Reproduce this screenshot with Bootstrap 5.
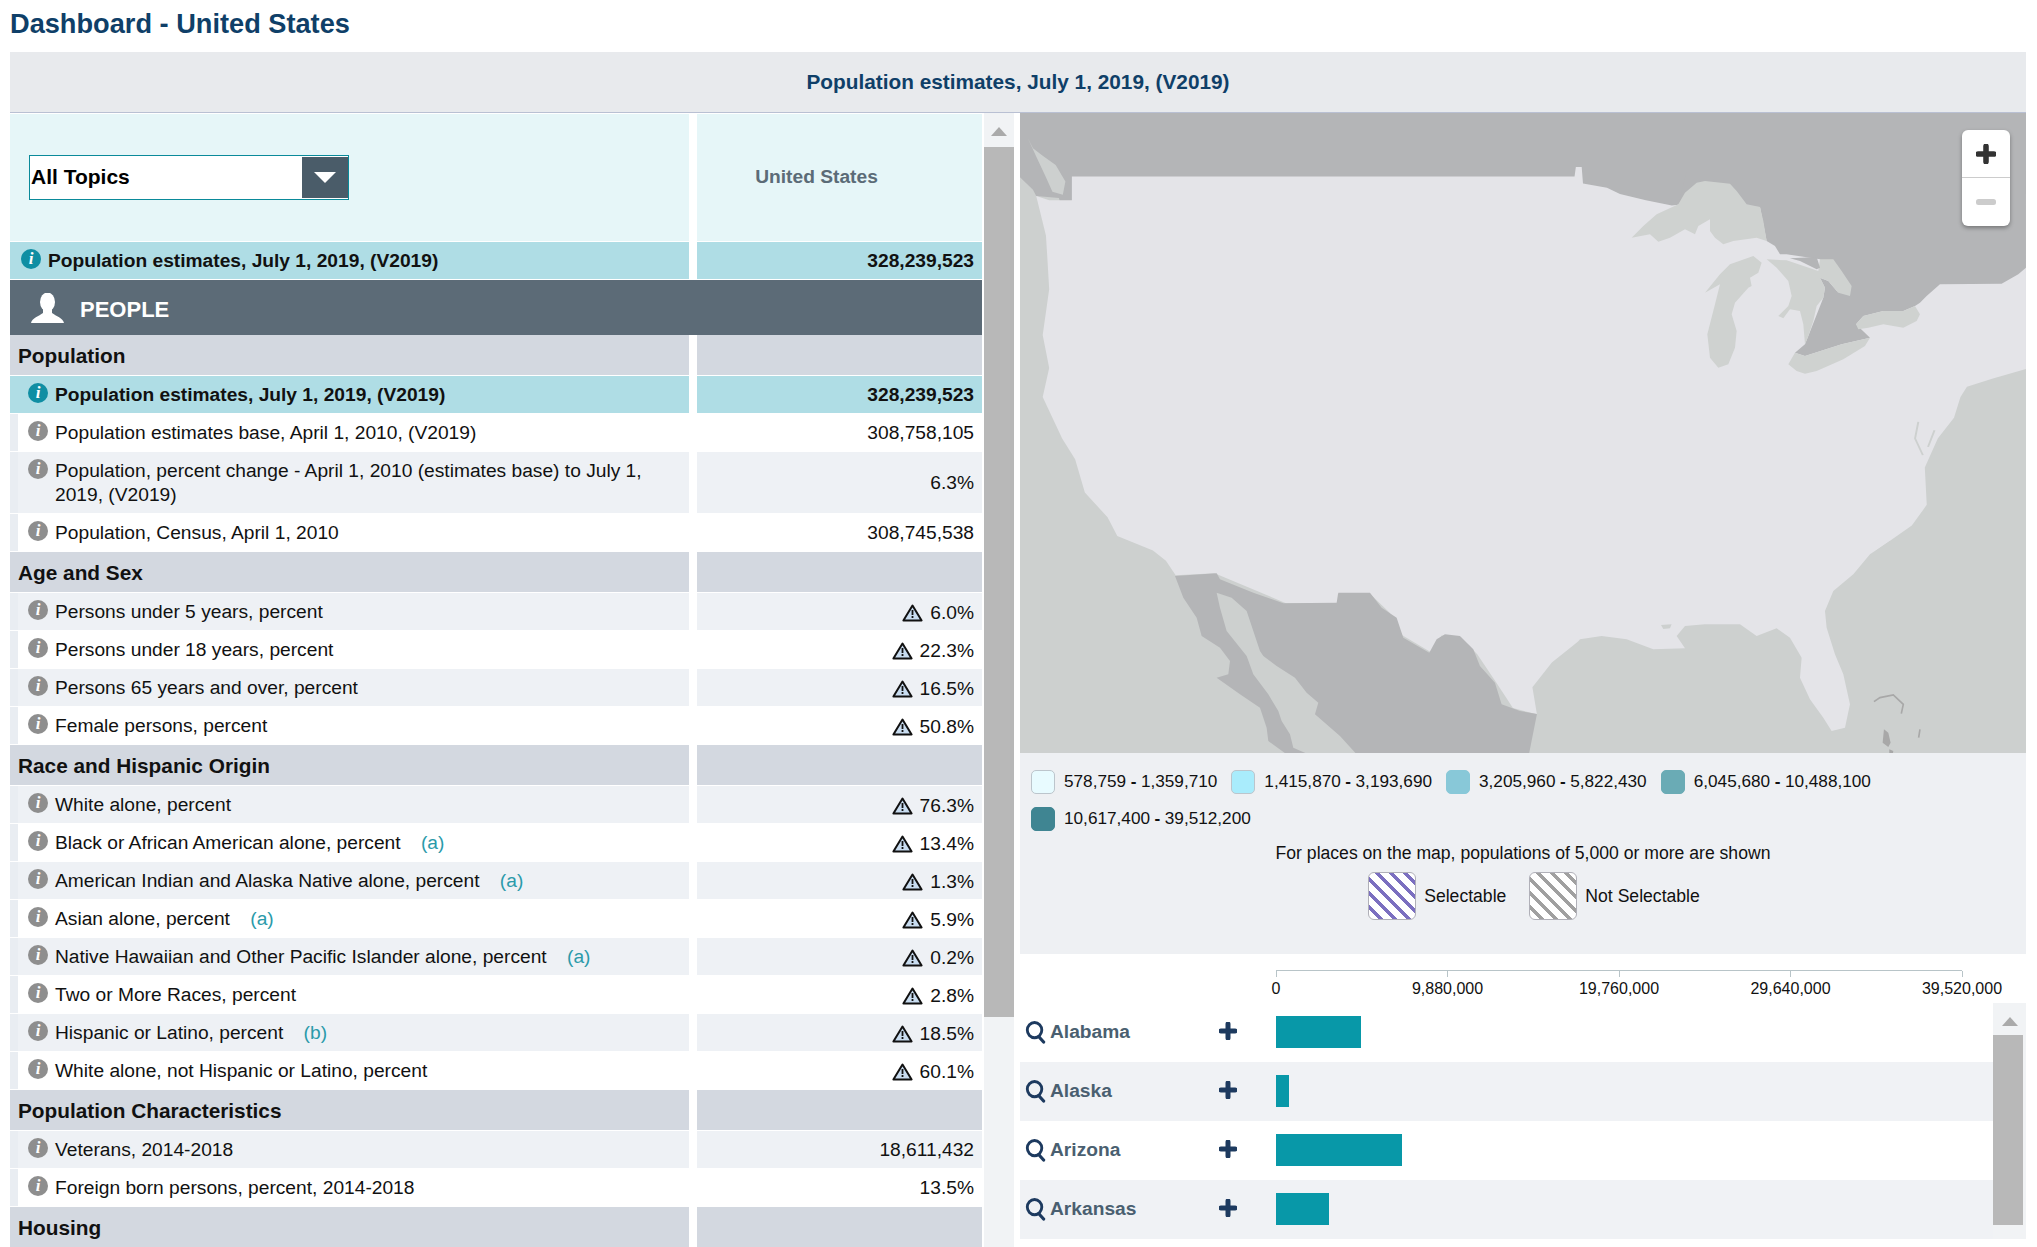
<!DOCTYPE html>
<html lang="en">
<head>
<meta charset="UTF-8">
<title>Dashboard - United States</title>
<link href="https://cdn.jsdelivr.net/npm/bootstrap@5.3.0/dist/css/bootstrap.min.css" rel="stylesheet">
<style>
    html, body { height: 1247px; overflow: hidden; }
    body { font-family: "Liberation Sans", Arial, sans-serif; font-size: 19.2px; color: #111; background: #fff; }
    .dash-title { height: 52px; margin: 0; padding: 8px 0 0 10px; font-size: 27.2px; font-weight: 700; line-height: 32px; color: #0f3f68; }
    .page-body { width: 2016px; margin-left: 10px; }
    .top-band { height: 61px; background: #e8eaed; border-bottom: 1px solid #b9c0d3; color: #0f3f68; font-size: 20.8px; font-weight: 700; }
    .left-pane { width: 1010px; height: 1134px; }
    .data-col { width: 972px; }
    .right-pane { width: 1006px; }

    /* table rows */
    .data-row { padding-bottom: 1px; line-height: 24px; }
    .cell-label { width: 679px; padding: 6.5px 10px 6.5px 10px; border-left: 8px solid #e9edf2; }
    .cell-val { width: 285px; padding: 6.5px 8px; }
    .warn-val { padding-top: 8px; padding-bottom: 5px; }
    .tint > div { background-color: #eef1f5; }
    .hot > div { background-color: #afdde5; font-weight: 700; }
    .hot .cell-label { border-left-color: #afdde5; }
    .top-hot .cell-label { border-left: 0; padding-left: 11px; }
    .sect-row { padding-bottom: 1px; font-size: 20.8px; font-weight: 700; }
    .sect-row > div { height: 40px; background: #d3d8e0; line-height: 42px; }
    .sect-row .cell-label { width: 679px; border: 0; padding: 0 0 0 8px; }
    .sect-row .cell-val { width: 285px; padding: 0; }
    .head-row { height: 129px; padding: 1px 0 1px 0; }
    .head-row > div { background: #e6f6f8; }
    .head-a { width: 679px; padding-left: 19px; }
    .head-b { width: 285px; color: #5b6b77; font-weight: 700; font-size: 19.2px; padding: 0 46px 0 0; }
    .topic-box { width: 320px; height: 45px; background: #fff; border: 1px solid #0a8a9a; font-size: 21px; font-weight: 700; color: #000; padding-left: 1px; }
    .topic-box > span { margin-top: -2px; }
    .topic-arrow { width: 46px; background: #4a5c69; margin: 1px 0; }
    .topic-arrow i { display: block; border-left: 11px solid transparent; border-right: 11px solid transparent; border-top: 11px solid #fff; }
    .people-band { height: 55px; width: 972px; background: #5c6b77; color: #fff; font-size: 22px; font-weight: 700; padding-left: 21px; gap: 16px; }
    .people-band > span { padding-top: 3px; }

    .info-dot { flex: 0 0 20px; width: 20px; height: 20px; margin: 0 7px 0 0; background: #8e8e8e; color: #fff; font: italic 700 17px/20px "Liberation Serif", serif; text-align: center; }
    .hot .info-dot { background: #0f8ea3; }
    .note-ref { color: #2a9aaa; margin-left: 15px; }
    .warn-ico { width: 21px; height: 18px; margin-right: 7px; }

    /* fake scrollbars */
    .scroll-col { width: 30px; margin-left: 2px; background: #f1f3f5; }
    .scroll-up { height: 34px; padding-top: 14px; }
    .scroll-up i { display: block; margin: 0 auto; width: 0; border-left: 8px solid transparent; border-right: 8px solid transparent; border-bottom: 9px solid #aaa; }
    .scroll-thumb { height: 870px; background: #b8b8b8; }

    /* map */
    .map-box { height: 640px; }
    .map-art { display: block; width: 1006px; height: 640px; }
    .zoom-ctl { position: absolute; top: 17px; right: 16px; width: 48px; height: 96px; background: #fff; border-radius: 6px; box-shadow: 0 2px 4px rgba(0,0,0,.35); }
    .zoom-ctl > div { height: 48px; }
    .zoom-ctl > div:first-child { border-bottom: 1px solid #ccc; color: #333; }

    /* legend */
    .legend-box { height: 201px; background: #eef0f3; font-size: 17.2px; padding: 16px 0 0 11px; }
    .legend-line { column-gap: 14px; row-gap: 11px; height: 60px; align-content: flex-start; }
    .legend-line b { margin: 0 4.5px; }
    .swatch { width: 24px; height: 24px; border-radius: 5px; margin-right: 9px; border: 1px solid #bcc5cc; }
    .sw1 { background: #e8fbff; }
    .sw2 { background: #a9ecfc; }
    .sw3 { background: #88c8d8; border-color: #88c8d8; }
    .sw4 { background: #6aabb5; border-color: #6aabb5; }
    .sw5 { background: #3f8592; border-color: #3f8592; }
    .legend-note { margin: 12px 0 0 -11px; line-height: 24px; font-size: 17.6px; }
    .hatch-line { margin: 7px 0 0 -11px; padding-left: 22px; gap: 23px; font-size: 17.6px; }
    .hatch { width: 48px; height: 48px; border-radius: 6px; border: 1px solid #b0b0b8; margin-right: 8px; }
    .hatch-a { background: repeating-linear-gradient(45deg, #fff 0 6.5px, #7b6fc0 6.5px 10px); }
    .hatch-b { background: repeating-linear-gradient(45deg, #fff 0 6.5px, #a0a0a0 6.5px 10px); }

    /* chart */
    .axis-wrap { height: 48.5px; padding: 16px 0 0 256px; font-size: 16px; }
    .axis-line { width: 686px; border-top: 1px solid #b8c4c8; }
    .tick { width: 0; }
    .tick i { display: block; width: 1px; height: 6px; background: #b8c4c8; flex: none; }
    .tick span { white-space: nowrap; line-height: 18px; margin-top: 3px; }
    .state-col { width: 973px; }
    .state-row { height: 59px; }
    .state-row.band { background: #f0f2f5; }
    .state-name { width: 199px; padding-left: 5px; font-weight: 700; color: #4a5f70; }
    .state-name svg { margin-right: 4px; }
    .plus-cell { width: 57px; padding-bottom: 3px; color: #1d3a5f; }
    .bar-fill { height: 32px; background: #0898a8; }
    .scroll-col2 { width: 33px; background: #f1f3f5; }
    .scroll-up2 { height: 32px; padding-top: 14px; }
    .scroll-up2 i { display: block; margin: 0 auto; width: 0; border-left: 8px solid transparent; border-right: 8px solid transparent; border-bottom: 9px solid #aaa; }
    .scroll-thumb2 { height: 190px; width: 30px; background: #b8b8b8; }
</style>
</head>
<body>

<svg width="0" height="0" class="d-block">
    <symbol id="warn" viewBox="0 0 21 18">
        <path d="M10.5 1.6 L19.6 16.4 H1.4 Z" fill="#c8dcf0" stroke="#111" stroke-width="2" stroke-linejoin="round"/>
        <rect x="9.6" y="6" width="1.8" height="5" fill="#111"/>
        <rect x="9.6" y="12" width="1.8" height="2" fill="#111"/>
    </symbol>
    <symbol id="mag" viewBox="0 0 22 24">
        <ellipse cx="10" cy="10" rx="7.6" ry="8" fill="none" stroke="#1d3a5f" stroke-width="3"/>
        <path d="M14.5 17 L19.5 22.5" stroke="#1d3a5f" stroke-width="3.4" stroke-linecap="round"/>
    </symbol>
    <symbol id="plus" viewBox="0 0 18 18">
        <path d="M9 2 V16 M2 9 H16" stroke="currentColor" stroke-width="5" stroke-linecap="round"/>
    </symbol>
</svg>

<h1 class="dash-title">Dashboard - United States</h1>

<div class="page-body">
    <div class="top-band d-flex align-items-center justify-content-center">Population estimates, July 1, 2019, (V2019)</div>

    <div class="d-flex">
        <div class="left-pane d-flex overflow-hidden">
            <div class="data-col">
                <div class="head-row d-flex gap-2">
                    <div class="head-a d-flex align-items-center">
                        <div class="topic-box d-flex align-items-stretch justify-content-between">
                            <span class="align-self-center">All Topics</span>
                            <div class="topic-arrow d-flex align-items-center justify-content-center"><i></i></div>
                        </div>
                    </div>
                    <div class="head-b d-flex align-items-center justify-content-center">United States</div>
                </div>
                <div class="data-row hot top-hot d-flex gap-2">
                    <div class="cell-label d-flex"><span class="info-dot rounded-circle">i</span><span>Population estimates, July 1, 2019, (V2019)</span></div>
                    <div class="cell-val text-end">328,239,523</div>
                </div>
                <div class="people-band d-flex align-items-center">
                    <svg width="33" height="30" viewBox="0 0 33 30"><ellipse cx="16.5" cy="9" rx="7.5" ry="9.5" fill="#fff"/><path d="M0 30 C1 25 8 23 12 20 L12 15 H21 V20 C25 23 32 25 33 30 Z" fill="#fff"/></svg>
                    <span>PEOPLE</span>
                </div>

                <div class="sect-row d-flex gap-2"><div class="cell-label">Population</div><div class="cell-val"></div></div>
                <div class="data-row hot d-flex gap-2">
                    <div class="cell-label d-flex"><span class="info-dot rounded-circle">i</span><span>Population estimates, July 1, 2019, (V2019)</span></div>
                    <div class="cell-val text-end">328,239,523</div>
                </div>
                <div class="data-row d-flex gap-2">
                    <div class="cell-label d-flex"><span class="info-dot rounded-circle">i</span><span>Population estimates base, April 1, 2010, (V2019)</span></div>
                    <div class="cell-val text-end">308,758,105</div>
                </div>
                <div class="data-row tint d-flex gap-2">
                    <div class="cell-label d-flex"><span class="info-dot rounded-circle">i</span><span>Population, percent change - April 1, 2010 (estimates base) to July 1, 2019, (V2019)</span></div>
                    <div class="cell-val d-flex align-items-center justify-content-end">6.3%</div>
                </div>
                <div class="data-row d-flex gap-2">
                    <div class="cell-label d-flex"><span class="info-dot rounded-circle">i</span><span>Population, Census, April 1, 2010</span></div>
                    <div class="cell-val text-end">308,745,538</div>
                </div>

                <div class="sect-row d-flex gap-2"><div class="cell-label">Age and Sex</div><div class="cell-val"></div></div>
                <div class="data-row tint d-flex gap-2">
                    <div class="cell-label d-flex"><span class="info-dot rounded-circle">i</span><span>Persons under 5 years, percent</span></div>
                    <div class="cell-val warn-val d-flex align-items-center justify-content-end"><svg class="warn-ico"><use href="#warn"/></svg>6.0%</div>
                </div>
                <div class="data-row d-flex gap-2">
                    <div class="cell-label d-flex"><span class="info-dot rounded-circle">i</span><span>Persons under 18 years, percent</span></div>
                    <div class="cell-val warn-val d-flex align-items-center justify-content-end"><svg class="warn-ico"><use href="#warn"/></svg>22.3%</div>
                </div>
                <div class="data-row tint d-flex gap-2">
                    <div class="cell-label d-flex"><span class="info-dot rounded-circle">i</span><span>Persons 65 years and over, percent</span></div>
                    <div class="cell-val warn-val d-flex align-items-center justify-content-end"><svg class="warn-ico"><use href="#warn"/></svg>16.5%</div>
                </div>
                <div class="data-row d-flex gap-2">
                    <div class="cell-label d-flex"><span class="info-dot rounded-circle">i</span><span>Female persons, percent</span></div>
                    <div class="cell-val warn-val d-flex align-items-center justify-content-end"><svg class="warn-ico"><use href="#warn"/></svg>50.8%</div>
                </div>

                <div class="sect-row d-flex gap-2"><div class="cell-label">Race and Hispanic Origin</div><div class="cell-val"></div></div>
                <div class="data-row tint d-flex gap-2">
                    <div class="cell-label d-flex"><span class="info-dot rounded-circle">i</span><span>White alone, percent</span></div>
                    <div class="cell-val warn-val d-flex align-items-center justify-content-end"><svg class="warn-ico"><use href="#warn"/></svg>76.3%</div>
                </div>
                <div class="data-row d-flex gap-2">
                    <div class="cell-label d-flex"><span class="info-dot rounded-circle">i</span><span>Black or African American alone, percent <span class="note-ref">(a)</span></span></div>
                    <div class="cell-val warn-val d-flex align-items-center justify-content-end"><svg class="warn-ico"><use href="#warn"/></svg>13.4%</div>
                </div>
                <div class="data-row tint d-flex gap-2">
                    <div class="cell-label d-flex"><span class="info-dot rounded-circle">i</span><span>American Indian and Alaska Native alone, percent <span class="note-ref">(a)</span></span></div>
                    <div class="cell-val warn-val d-flex align-items-center justify-content-end"><svg class="warn-ico"><use href="#warn"/></svg>1.3%</div>
                </div>
                <div class="data-row d-flex gap-2">
                    <div class="cell-label d-flex"><span class="info-dot rounded-circle">i</span><span>Asian alone, percent <span class="note-ref">(a)</span></span></div>
                    <div class="cell-val warn-val d-flex align-items-center justify-content-end"><svg class="warn-ico"><use href="#warn"/></svg>5.9%</div>
                </div>
                <div class="data-row tint d-flex gap-2">
                    <div class="cell-label d-flex"><span class="info-dot rounded-circle">i</span><span>Native Hawaiian and Other Pacific Islander alone, percent <span class="note-ref">(a)</span></span></div>
                    <div class="cell-val warn-val d-flex align-items-center justify-content-end"><svg class="warn-ico"><use href="#warn"/></svg>0.2%</div>
                </div>
                <div class="data-row d-flex gap-2">
                    <div class="cell-label d-flex"><span class="info-dot rounded-circle">i</span><span>Two or More Races, percent</span></div>
                    <div class="cell-val warn-val d-flex align-items-center justify-content-end"><svg class="warn-ico"><use href="#warn"/></svg>2.8%</div>
                </div>
                <div class="data-row tint d-flex gap-2">
                    <div class="cell-label d-flex"><span class="info-dot rounded-circle">i</span><span>Hispanic or Latino, percent <span class="note-ref">(b)</span></span></div>
                    <div class="cell-val warn-val d-flex align-items-center justify-content-end"><svg class="warn-ico"><use href="#warn"/></svg>18.5%</div>
                </div>
                <div class="data-row d-flex gap-2">
                    <div class="cell-label d-flex"><span class="info-dot rounded-circle">i</span><span>White alone, not Hispanic or Latino, percent</span></div>
                    <div class="cell-val warn-val d-flex align-items-center justify-content-end"><svg class="warn-ico"><use href="#warn"/></svg>60.1%</div>
                </div>

                <div class="sect-row d-flex gap-2"><div class="cell-label">Population Characteristics</div><div class="cell-val"></div></div>
                <div class="data-row tint d-flex gap-2">
                    <div class="cell-label d-flex"><span class="info-dot rounded-circle">i</span><span>Veterans, 2014-2018</span></div>
                    <div class="cell-val text-end">18,611,432</div>
                </div>
                <div class="data-row d-flex gap-2">
                    <div class="cell-label d-flex"><span class="info-dot rounded-circle">i</span><span>Foreign born persons, percent, 2014-2018</span></div>
                    <div class="cell-val text-end">13.5%</div>
                </div>

                <div class="sect-row d-flex gap-2"><div class="cell-label">Housing</div><div class="cell-val"></div></div>
            </div>
            <div class="scroll-col">
                <div class="scroll-up"><i></i></div>
                <div class="scroll-thumb"></div>
            </div>
        </div>

        <div class="right-pane">
            <div class="map-box position-relative overflow-hidden">
                <svg class="map-art" viewBox="1020 112 1006 640" preserveAspectRatio="none">
                    <rect x="1020" y="112" width="1006" height="640" fill="#cdd0cf"/>
                    <g transform="translate(1020 110) scale(.6486 .4146)">
                        <!-- canada west -->
                        <path fill="#b4b5b7" d="M0 5 H1551 V385 L1520 412 L1420 418 L1395 450 L1370 480 L1300 500 L1310 545 L1240 575 L1195 605 L1180 420 L900 320 L80 320 L60 210 L25 205 L20 190 L0 160 Z"/>
                        <path fill="#cdd0cf" d="M12 65 L20 90 L35 108 L55 130 L70 170 L66 202 L50 195 L40 160 L25 110 Z"/>
                        <!-- usa -->
                        <path fill="#e4e4e8" d="M25 205 L45 215 L80 215 L80 158 L855 158 L857 135 L866 135 L868 175 L905 185 L925 200 L965 215 L1005 228 L1160 200 L1551 200 L1551 622 L1500 645 L1460 665 L1450 690 L1440 740 L1415 790 L1395 860 L1398 950 L1375 1000 L1320 1060 L1320 1500 L860 1500 L860 1280 L820 1330 L790 1390 L797 1455 L760 1440 L735 1380 L705 1310 L680 1270 L650 1265 L633 1305 L590 1265 L570 1210 L540 1165 L490 1165 L490 1187 L410 1187 L300 1115 L240 1120 L225 1085 L205 1060 L150 1025 L135 980 L100 920 L85 840 L65 790 L50 740 L35 690 L45 620 L35 540 L45 430 L42 350 L40 300 Z"/>
                        <path fill="none" stroke="#cdd0cf" stroke-width="3" d="M1385 750 L1380 790 L1392 830 M1410 770 L1400 810"/>
                    </g>
                    <!-- gulf and atlantic, page x = 1560 + X/3 -->
                    <g transform="translate(1560 540) scale(.3333)">
                        <path fill="#cdd0cf" d="M0 350 L30 330 L60 295 L125 285 L200 295 L280 325 L375 322 L350 285 L375 255 L435 250 L540 250 L590 285 L650 262 L690 290 L725 350 L720 410 L750 475 L790 530 L815 570 L855 560 L870 490 L850 400 L825 340 L800 260 L795 210 L820 150 L880 100 L930 40 L990 0 L1398 0 L1398 640 L0 640 Z"/>
                        <path fill="#cdd0cf" d="M303 252 L335 250 L330 262 L310 264 Z"/>
                        <path fill="none" stroke="#a8a8a8" stroke-width="5" d="M942 482 L960 470 L1000 462 L1030 490 L1024 518 M1080 565 L1076 590"/>
                        <path fill="#a8a8a8" d="M972 565 L985 575 L992 605 L985 618 L968 605 Z M988 625 L1000 630 L998 640 L988 640 Z"/>
                    </g>
                    <!-- mexico, page x = 1020 + X/3 -->
                    <g transform="translate(1020 540) scale(.3333)">
                        <path fill="#b4b5b7" d="M465 105 L590 97 L600 115 L700 155 L790 187 L950 185 L955 155 L1050 155 L1085 200 L1130 230 L1150 290 L1228 335 L1250 295 L1275 280 L1320 285 L1360 325 L1380 375 L1425 425 L1445 490 L1500 510 L1551 519 L1527 640 L1010 640 L960 585 L885 520 L895 485 L860 455 L825 410 L770 375 L730 345 L720 330 L680 210 L635 170 L590 155 L600 200 L620 270 L680 345 L700 400 L745 460 L775 510 L785 540 L810 580 L820 620 L865 640 L800 640 L745 600 L740 560 L720 500 L660 460 L590 410 L625 400 L630 360 L600 320 L545 285 L530 230 L490 170 Z"/>
                    </g>
                    <!-- great lakes, page x = 1620 + X/3 -->
                    <g transform="translate(1620 170) scale(.3333)">
                        <path fill="#b4b5b7" d="M175 100 L200 0 L1218 0 L1218 290 L1195 310 L1145 338 L960 340 L920 375 L900 395 L885 405 L850 420 L790 420 L730 435 L708 460 L750 500 L665 520 L555 555 L525 545 L555 520 L565 495 L610 380 L615 350 L600 320 L625 330 L655 365 L600 265 L500 250 L480 250 L465 225 L440 210 L420 108 Z"/>
                        <g fill="#cfd2d0">
                            <path d="M35 200 L70 165 L110 130 L175 100 L195 65 L230 35 L255 30 L330 38 L350 60 L380 100 L420 108 L430 150 L440 210 L410 200 L340 210 L310 220 L285 200 L270 180 L270 145 L235 165 L225 190 L195 175 L150 200 L115 212 L90 190 Z"/>
                            <path d="M255 365 L300 310 L330 280 L400 255 L425 275 L415 305 L390 320 L395 345 L385 350 L345 395 L335 430 L350 480 L345 530 L325 580 L295 590 L270 560 L262 490 L285 400 L300 340 Z"/>
                            <path d="M440 265 L500 268 L595 300 L600 265 L640 265 L665 300 L695 345 L690 375 L655 365 L625 330 L600 320 L615 350 L610 380 L590 405 L580 450 L565 495 L555 520 L550 460 L540 420 L510 415 L490 442 L475 435 L505 405 L515 375 L505 330 L470 290 Z"/>
                            <path d="M505 580 L525 545 L555 555 L665 520 L750 500 L735 525 L670 565 L590 600 L555 608 L530 600 Z"/>
                            <path d="M708 460 L730 435 L790 420 L850 420 L885 405 L900 430 L890 450 L850 470 L790 460 L745 470 L715 475 Z"/>
                        </g>
                        <path fill="#b4b5b7" d="M510 262 L590 258 L600 290 L590 295 L540 270 Z"/>
                    </g>
                </svg>
                <div class="zoom-ctl">
                    <div class="d-flex align-items-center justify-content-center"><svg width="20" height="20"><use href="#plus"/></svg></div>
                    <div class="d-flex align-items-center justify-content-center"><svg width="20" height="6" viewBox="0 0 20 6"><rect width="20" height="6" rx="2.5" fill="#ccc"/></svg></div>
                </div>
            </div>

            <div class="legend-box">
                <div class="legend-line d-flex flex-wrap">
                    <div class="d-flex align-items-center"><span class="swatch sw1"></span>578,759<b>-</b>1,359,710</div>
                    <div class="d-flex align-items-center"><span class="swatch sw2"></span>1,415,870<b>-</b>3,193,690</div>
                    <div class="d-flex align-items-center"><span class="swatch sw3"></span>3,205,960<b>-</b>5,822,430</div>
                    <div class="d-flex align-items-center"><span class="swatch sw4"></span>6,045,680<b>-</b>10,488,100</div>
                    <div class="d-flex align-items-center"><span class="swatch sw5"></span>10,617,400<b>-</b>39,512,200</div>
                </div>
                <div class="legend-note text-center">For places on the map, populations of 5,000 or more are shown</div>
                <div class="hatch-line d-flex justify-content-center">
                    <div class="d-flex align-items-center"><span class="hatch hatch-a"></span>Selectable</div>
                    <div class="d-flex align-items-center"><span class="hatch hatch-b"></span>Not Selectable</div>
                </div>
            </div>

            <div class="axis-wrap">
                <div class="axis-line d-flex justify-content-between">
                    <div class="tick d-flex flex-column align-items-center"><i></i><span>0</span></div>
                    <div class="tick d-flex flex-column align-items-center"><i></i><span>9,880,000</span></div>
                    <div class="tick d-flex flex-column align-items-center"><i></i><span>19,760,000</span></div>
                    <div class="tick d-flex flex-column align-items-center"><i></i><span>29,640,000</span></div>
                    <div class="tick d-flex flex-column align-items-center"><i></i><span>39,520,000</span></div>
                </div>
            </div>

            <div class="d-flex">
                <div class="state-col">
                    <div class="state-row d-flex align-items-center">
                        <div class="state-name d-flex align-items-center"><svg width="21" height="24"><use href="#mag"/></svg>Alabama</div>
                        <div class="plus-cell d-flex align-items-center"><svg width="18" height="18"><use href="#plus"/></svg></div>
                        <div class="bar-fill" style="width:85px"></div>
                    </div>
                    <div class="state-row band d-flex align-items-center">
                        <div class="state-name d-flex align-items-center"><svg width="21" height="24"><use href="#mag"/></svg>Alaska</div>
                        <div class="plus-cell d-flex align-items-center"><svg width="18" height="18"><use href="#plus"/></svg></div>
                        <div class="bar-fill" style="width:13px"></div>
                    </div>
                    <div class="state-row d-flex align-items-center">
                        <div class="state-name d-flex align-items-center"><svg width="21" height="24"><use href="#mag"/></svg>Arizona</div>
                        <div class="plus-cell d-flex align-items-center"><svg width="18" height="18"><use href="#plus"/></svg></div>
                        <div class="bar-fill" style="width:126px"></div>
                    </div>
                    <div class="state-row band d-flex align-items-center">
                        <div class="state-name d-flex align-items-center"><svg width="21" height="24"><use href="#mag"/></svg>Arkansas</div>
                        <div class="plus-cell d-flex align-items-center"><svg width="18" height="18"><use href="#plus"/></svg></div>
                        <div class="bar-fill" style="width:53px"></div>
                    </div>
                </div>
                <div class="scroll-col2">
                    <div class="scroll-up2"><i></i></div>
                    <div class="scroll-thumb2"></div>
                </div>
            </div>
        </div>
    </div>
</div>

<script src="https://cdn.jsdelivr.net/npm/bootstrap@5.3.0/dist/js/bootstrap.bundle.min.js"></script>
</body>
</html>
